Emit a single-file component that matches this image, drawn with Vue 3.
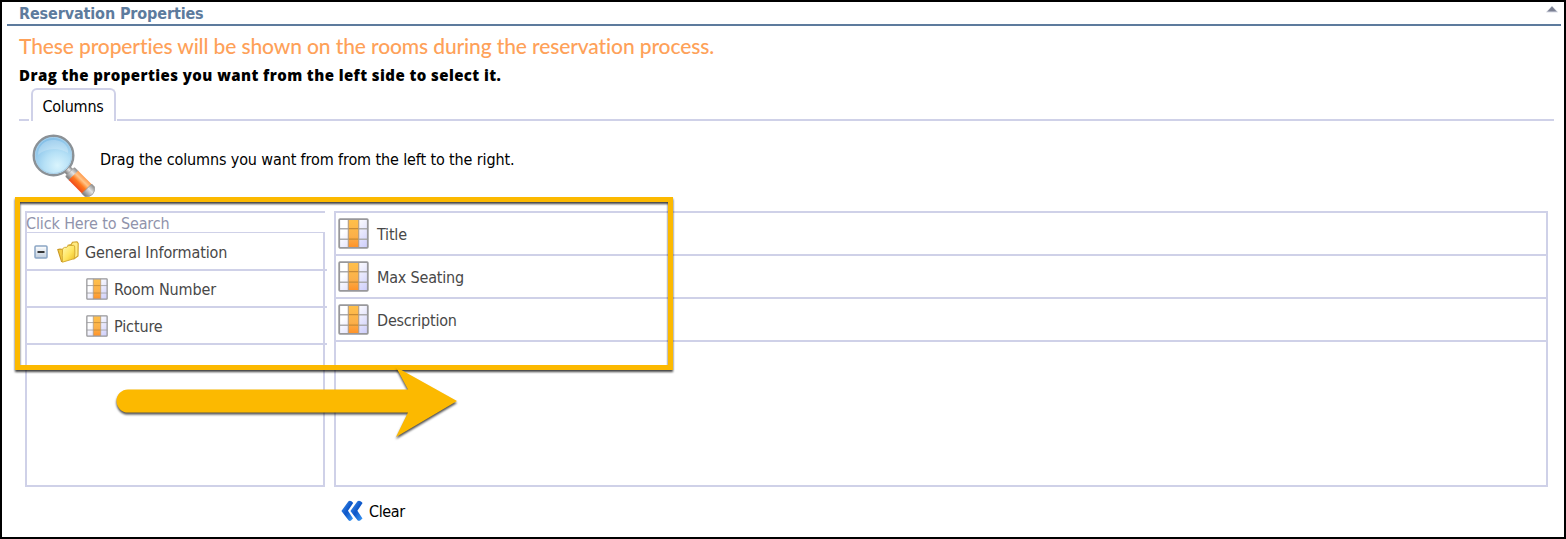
<template>
  <div class="page">
    <header class="section-header">
      <h2 class="section-title">Reservation Properties</h2>
      <svg class="collapse" width="12" height="7" viewBox="0 0 12 7">
        <path d="M6 0 L12 6.3 H0 Z" fill="#b9bdcb" />
        <path d="M6 .4 L10.3 5.3 H1.7 Z" fill="#7b8093" />
      </svg>
    </header>

    <p class="intro">These properties will be shown on the rooms during the reservation process.</p>
    <p class="hint">Drag the properties you want from the left side to select it.</p>

    <nav class="tabs">
      <span class="tab-line tab-line-start"></span>
      <button class="tab">Columns</button>
      <span class="tab-line tab-line-end"></span>
    </nav>

    <div class="instructions">
      <svg class="magnifier" width="66" height="66" viewBox="0 0 66 66">
        <defs>
          <radialGradient id="glass" cx=".6" cy=".75" r=".75">
            <stop offset="0" stop-color="#d9f4fd" />
            <stop offset=".45" stop-color="#b5e0f6" />
            <stop offset="1" stop-color="#7dbbe6" />
          </radialGradient>
          <linearGradient id="handle" x1="0" y1="0" x2="0" y2="1">
            <stop offset="0" stop-color="#ff9a4c" />
            <stop offset=".3" stop-color="#ffc58a" />
            <stop offset=".6" stop-color="#ff7a1f" />
            <stop offset="1" stop-color="#ee4a1c" />
          </linearGradient>
          <linearGradient id="metal" x1="0" y1="0" x2="0" y2="1">
            <stop offset="0" stop-color="#8b8b8b" />
            <stop offset=".4" stop-color="#e4e4e4" />
            <stop offset="1" stop-color="#777" />
          </linearGradient>
        </defs>
        <circle cx="22.5" cy="22.5" r="19.8" fill="url(#glass)" stroke="#8b9196" stroke-width="2.4" />
        <circle cx="22.5" cy="22.5" r="18" fill="none" stroke="#a9cfe8" stroke-width="1" />
        <path d="M7 22 C7 12 15 6 24 7 C34 8 38 15 37 20 C27 14 15 15 7 22Z" fill="#fff" opacity=".22" />
        <g transform="translate(36 36) rotate(45)">
          <rect x="0" y="-4" width="9" height="8" rx="1.5" fill="url(#metal)" stroke="#929292" stroke-width=".7" />
          <rect x="4" y="-6.5" width="6" height="13" rx="1.5" fill="url(#metal)" stroke="#a2a2a2" stroke-width=".7" />
          <rect x="9" y="-6.7" width="21" height="13.4" fill="url(#handle)" />
          <path d="M28 -6.8 H32 Q36 -4 36 0 Q36 4 32 6.8 H28Z" fill="url(#metal)" stroke="#959595" stroke-width=".7" />
        </g>
      </svg>
      <span class="instruction-text">Drag the columns you want from from the left to the right.</span>
    </div>

    <main class="panels">
      <section class="source">
        <div class="search">Click Here to Search</div>
        <div class="tree">
          <div class="tree-row">
            <svg class="toggle" width="14" height="14" viewBox="0 0 14 14">
              <defs>
                <linearGradient id="toggle-bg" x1="0" y1="0" x2="0" y2="1">
                  <stop offset="0" stop-color="#fff" />
                  <stop offset="1" stop-color="#bfcddd" />
                </linearGradient>
              </defs>
              <rect x="1" y="1" width="12" height="12" rx="1" fill="url(#toggle-bg)" stroke="#8aa5c4" stroke-width="1.5" />
              <path d="M3.5 7 H10.5" stroke="#222" stroke-width="1.8" />
            </svg>
            <svg class="folder" width="22" height="22" viewBox="0 0 22 22">
              <defs>
                <linearGradient id="folder-front" x1="0" y1="0" x2="1" y2="1">
                  <stop offset="0" stop-color="#fff9b5" />
                  <stop offset=".55" stop-color="#ffe45c" />
                  <stop offset="1" stop-color="#e9b61c" />
                </linearGradient>
              </defs>
              <path d="M11 4.4 L14.2 3.6 L15.5 1.2 L20 .8 L21.2 2.5 L21 15 L17 18 Z" fill="#ffeb82" stroke="#cfa128" stroke-width="1.1" />
              <path d="M.8 8.6 L3 8 L6 8.4 L6 20.5 L4.5 20.5 Z" fill="#f3cc45" stroke="#c89724" stroke-width="1.1" />
              <path d="M5.6 8.4 Q6 6.6 7.5 6.4 L10 6.2 L11.5 4.6 L16.6 4.4 Q17.8 4.6 17.7 6 Q18.2 12 17.4 17.6 L5.4 21.2 Q5 14 5.6 8.4Z" fill="url(#folder-front)" stroke="#d6ac34" stroke-width="1" />
            </svg>
            <span class="label">General Information</span>
          </div>
          <div v-for="item in available" :key="item" class="tree-row tree-child">
            <svg width="22" height="22" viewBox="0 0 31 31">
              <use href="#column-icon" />
            </svg>
            <span class="label">{{ item }}</span>
          </div>
        </div>
      </section>

      <section class="target">
        <div v-for="item in selected" :key="item" class="target-row">
          <svg class="target-icon" width="31" height="31" viewBox="0 0 31 31">
            <use href="#column-icon" />
          </svg>
          <span class="label">{{ item }}</span>
        </div>
      </section>
    </main>

    <button class="clear">
      <svg width="22" height="22" viewBox="0 0 22 22">
        <defs>
          <linearGradient id="chevron" x1="0" y1="0" x2="1" y2="1">
            <stop offset="0" stop-color="#4a9af0" />
            <stop offset=".5" stop-color="#0d56c8" />
            <stop offset="1" stop-color="#3c9cf7" />
          </linearGradient>
        </defs>
        <path d="M7.5 1.2 Q9 .2 10.8 1.5 L12.2 2.9 L7 10.8 L12 18.6 L10 20.6 Q8.6 21.4 7.5 20.2 L.4 11 Z" fill="url(#chevron)" />
        <path d="M16.5 1.2 Q18 .2 20 1.5 L21.6 2.9 L16.4 10.8 L21.5 18.4 L19.2 20.4 Q17.7 21.4 16.5 20.2 L9.4 11 Z" fill="url(#chevron)" />
      </svg>
      <span>Clear</span>
    </button>

    <!-- shared table icon with the middle column highlighted -->
    <svg class="sprite" width="0" height="0">
      <defs>
        <linearGradient id="cell" x1="0" y1="0" x2="1" y2="1">
          <stop offset=".3" stop-color="#fff" />
          <stop offset="1" stop-color="#ccccfb" />
        </linearGradient>
        <linearGradient id="cell-active" x1="0" y1="0" x2="0" y2="1">
          <stop offset="0" stop-color="#ffc04a" />
          <stop offset=".6" stop-color="#fbb04a" />
          <stop offset="1" stop-color="#ff9228" />
        </linearGradient>
        <symbol id="column-icon" viewBox="0 0 31 31">
          <rect x="1.2" y="1.2" width="28.6" height="28.6" rx=".8" fill="url(#cell)" />
          <path d="M1 10.7 H30 M1 21.2 H30" stroke="#ababae" stroke-width="1.4" />
          <rect x="10.3" y="1.5" width="10.4" height="28" fill="url(#cell-active)" />
          <path d="M10.3 10.7 H20.7 M10.3 21.2 H20.7" stroke="#c88b35" stroke-width="1.2" />
          <path d="M10.3 1 V30 M20.7 1 V30" stroke="#b09c85" stroke-width="1.1" />
          <rect x="1.2" y="1.2" width="28.6" height="28.6" rx=".8" fill="none" stroke="#98989b" stroke-width="1.8" />
        </symbol>
      </defs>
    </svg>

    <div class="highlight"></div>
    <svg class="arrow" width="350" height="80" viewBox="0 0 350 80">
      <path d="M18 24.5 H298 L286 2 L347 36 L286 72 L298 47.5 H18 A11.5 11.5 0 0 1 18 24.5Z" fill="#fcb900" />
    </svg>
  </div>
</template>

<script setup>
const available = ['Room Number', 'Picture']
const selected = ['Title', 'Max Seating', 'Description']
</script>

<style>
body {
  margin: 0;
  background: #fff;
}
</style>

<style scoped>
.page {
  position: relative;
  box-sizing: border-box;
  width: 1566px;
  height: 539px;
  overflow: hidden;
  border: 2px solid #000;
  background: #fff;
  color: #000;
  font-family: 'DejaVu Sans Condensed', 'DejaVu Sans', sans-serif;
  font-stretch: condensed;
  font-size: 16px;
  letter-spacing: -0.12px;
}

.section-header {
  display: flex;
  justify-content: space-between;
  box-sizing: border-box;
  height: 24px;
  margin: 0 3px 0 5px;
  padding: 0 3px 0 12px;
  border-bottom: 2px solid #5d7b9d;
}

.section-title {
  margin: 0;
  color: #5d7b9d;
  font-size: 16px;
  line-height: 24px;
}

.collapse {
  margin-top: 4px;
}

.intro,
.hint {
  margin: 0 0 0 17px;
  white-space: nowrap;
}

.intro {
  height: 38px;
  color: #fea159;
  font-family: Lato, sans-serif;
  font-size: 21px;
  font-weight: 500;
  letter-spacing: -0.12px;
  line-height: 40px;
}

.hint {
  height: 24px;
  font-family: 'Open Sans', sans-serif;
  font-size: 15px;
  font-stretch: normal;
  font-weight: 800;
  letter-spacing: 0.42px;
  line-height: 23px;
}

.tabs {
  display: flex;
  align-items: flex-end;
  height: 33px;
  margin: 0 10px 0 17px;
}

.tab-line {
  height: 2px;
  background: #cfd1e8;
}

.tab-line-start {
  width: 10px;
  margin-right: 2px;
}

.tab-line-end {
  flex: 1;
  margin-left: 1px;
}

.tab {
  box-sizing: border-box;
  width: 85px;
  height: 33px;
  padding: 2px 1px 0 0;
  border: 2px solid #cfd1e8;
  border-bottom: 0;
  border-radius: 6px 6px 0 0;
  background: #fff;
  color: #000;
  font: inherit;
  letter-spacing: -0.2px;
}

.instructions {
  display: flex;
  height: 90px;
  padding-left: 29px;
}

.magnifier {
  margin-top: 12px;
}

.instruction-text {
  margin-left: 3px;
  line-height: 78px;
}

.panels {
  display: flex;
  gap: 9px;
  height: 276px;
  margin: 0 16px 0 23px;
}

.source {
  display: flex;
  flex-direction: column;
  width: 300px;
}

.search {
  box-sizing: border-box;
  height: 21px;
  border-top: 2px solid #cfd1e8;
  border-left: 2px solid #cfd1e8;
  color: #9093ab;
  line-height: 21px;
  text-indent: -1px;
}

.tree {
  flex: 1;
  border: 2px solid #cfd1e8;
  border-top-width: 1px;
}

.tree-row {
  display: flex;
  align-items: center;
  box-sizing: border-box;
  width: 300px;
  height: 37px;
  padding: 1px 0 0 7px;
  border-bottom: 2px solid #cfd1e8;
}

.tree-row:first-child {
  height: 38px;
  padding-top: 2px;
}

.tree-child {
  padding-left: 59px;
}

.folder {
  margin-left: 9px;
}

.label {
  margin-left: 6px;
  color: #484848;
}

.target {
  flex: 1;
  box-sizing: border-box;
  border: 2px solid #cfd1e8;
}

.target-row {
  display: flex;
  align-items: center;
  box-sizing: border-box;
  height: 43px;
  padding: 2px 0 0 2px;
  border-bottom: 2px solid #cfd1e8;
}

.target-icon {
  margin-bottom: 2px;
}

.target-row .label {
  margin-left: 8px;
  letter-spacing: -0.2px;
}

.clear {
  display: flex;
  align-items: center;
  gap: 6px;
  height: 22px;
  margin: 13px 0 0 339px;
  padding: 0;
  border: 0;
  background: none;
  color: #000;
  font: inherit;
  letter-spacing: -0.4px;
}

.sprite {
  position: absolute;
}

.highlight {
  position: absolute;
  top: 195px;
  left: 13px;
  box-sizing: border-box;
  width: 658px;
  height: 173px;
  border: 5px solid #fcb900;
  filter: drop-shadow(0 2px 1px rgba(0, 0, 0, 0.75));
}

.arrow {
  position: absolute;
  top: 363px;
  left: 108px;
  filter: drop-shadow(0 2px 1px rgba(0, 0, 0, 0.7));
}
</style>
